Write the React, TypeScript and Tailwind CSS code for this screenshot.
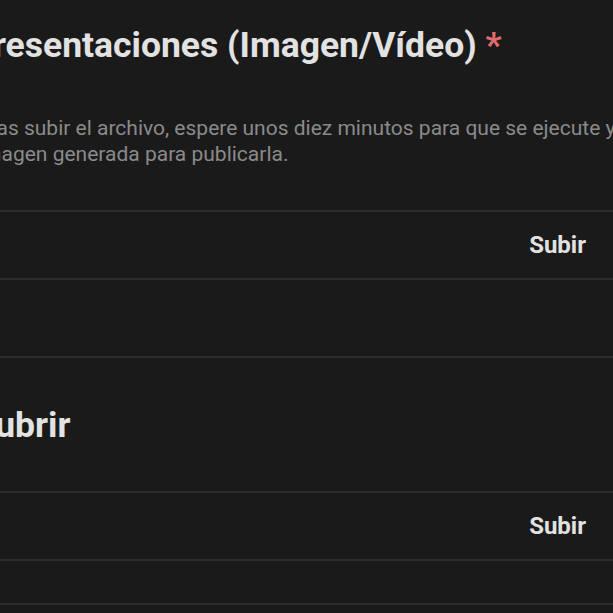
export default function App() {
  return (
    <div className="h-[613px] w-[613px] overflow-hidden bg-[#1a1a1a] font-['Roboto',sans-serif]">
      <section className="pt-[24px]">
        <h2 className="-ml-[30px] whitespace-nowrap text-[35.5px] font-bold leading-[42px] text-[#e2e2e2]">
          Presentaciones (Imagen/Vídeo) <span className="text-[#e06c6c]">*</span>
        </h2>
        <p className="-ml-[22px] mt-[49px] w-[820px] text-[21px] leading-[26px] text-[#8a8a8a]">
          Tras subir el archivo, espere unos diez minutos para que se ejecute y descargue la
          imagen generada para publicarla.
        </p>
        <div className="mt-[43px] border-t-2 border-[#2c2c2c]">
          <div className="flex h-[66px] items-center justify-end pr-[27px]">
            <button className="text-[24px] font-bold text-[#e2e2e2]">Subir</button>
          </div>
          <div className="h-[78px] border-t-2 border-[#2c2c2c]" />
        </div>
      </section>

      <section className="border-t-2 border-[#2c2c2c]">
        <h2 className="-ml-[28px] pt-[46px] text-[35.5px] font-bold leading-[42px] text-[#e2e2e2]">Cubrir</h2>
        <div className="mt-[45px] border-t-2 border-[#2c2c2c]">
          <div className="flex h-[66px] items-center justify-end pr-[27px]">
            <button className="text-[24px] font-bold text-[#e2e2e2]">Subir</button>
          </div>
          <div className="h-[44px] border-t-2 border-[#2c2c2c]" />
          <div className="h-[20px] border-t-2 border-[#2c2c2c]" />
        </div>
      </section>
    </div>
  )
}
